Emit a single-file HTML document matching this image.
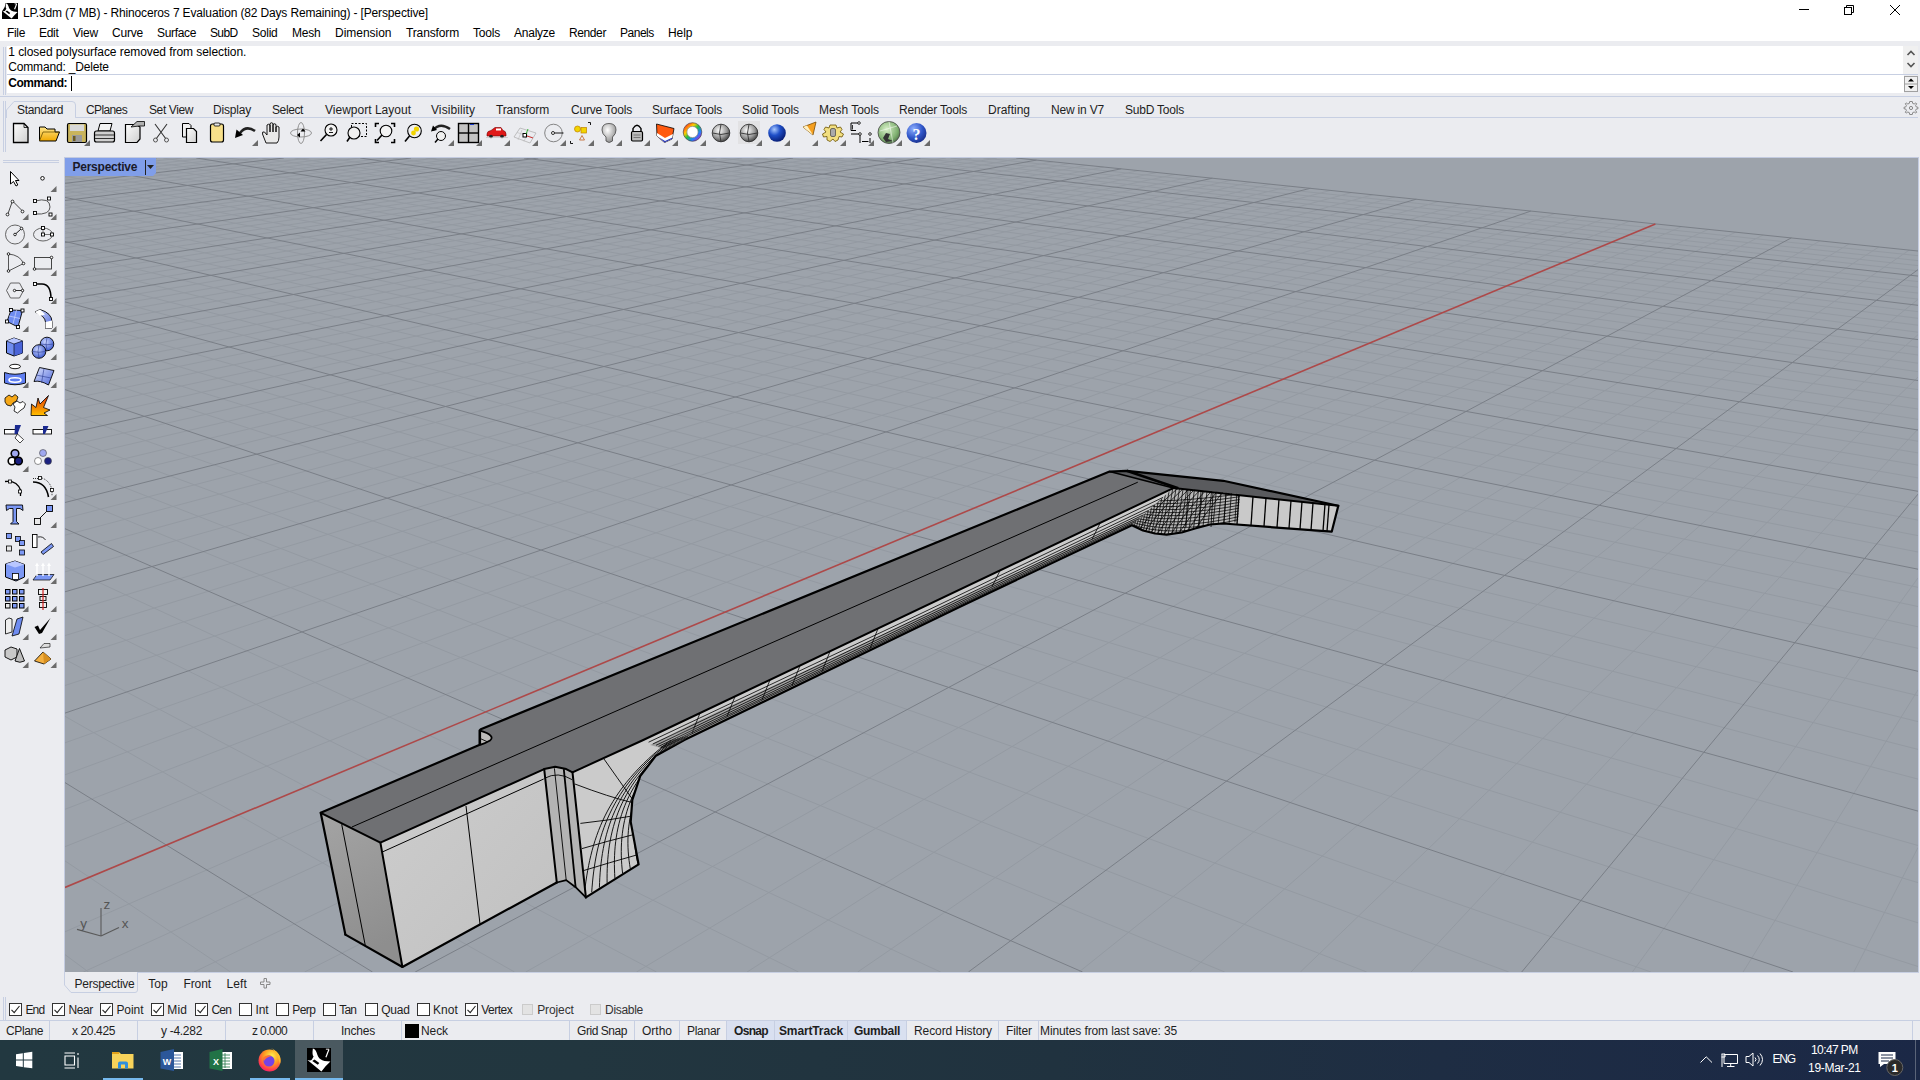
<!DOCTYPE html><html><head><meta charset="utf-8"><style>
html,body{margin:0;padding:0;}
body{width:1920px;height:1080px;overflow:hidden;position:relative;background:#ebecf0;font-family:"Liberation Sans",sans-serif;color:#000;}
.t{position:absolute;white-space:pre;}
.r{position:absolute;display:block;}
</style></head><body>
<div class="r" style="left:0px;top:0px;width:1920px;height:41px;background:#fff;"></div>
<svg class="r" style="left:2px;top:3px;" width="17" height="17" viewBox="0 0 17 17"><path d="M3.6 0 H16 V16 H0 V8.2 L1.2 6.5 Q3.2 4 3.6 0 Z" fill="#000"/><path d="M3.9 0.3 Q5.6 0.6 6.4 3 Q7 5 7.5 5.8 Q8.6 7.8 11.6 8.6 L15.6 9 L12.4 12.2 L9.6 15.6 L0.3 8 Q2.6 8.7 3.3 7.6 L4.4 5.6 Q3.3 4.8 3.9 0.3 Z" fill="#fff"/><path d="M3.5 8.6 L7.2 11.2 L8.2 10 L5 7.6 Z" fill="#000"/><path d="M14.6 1 L12.6 6.2" stroke="#fff" stroke-width="1.1"/><path d="M12.6 0.8 H14.8" stroke="#fff" stroke-width="0.8"/></svg>
<span class="t" style="left:23.00px;top:6.54px;font-size:12px;line-height:12px;letter-spacing:-0.146px;">LP.3dm (7 MB) - Rhinoceros 7 Evaluation (82 Days Remaining) - [Perspective]</span>
<svg class="r" style="left:1799px;top:9px;" width="10" height="2" viewBox="0 0 10 2"><rect x="0" y="0" width="10" height="1" fill="#000"/></svg>
<svg class="r" style="left:1844px;top:5px;" width="10" height="10" viewBox="0 0 10 10"><rect x="0.5" y="2.5" width="7" height="7" fill="none" stroke="#000"/><path d="M2.5 2.5 V0.5 H9.5 V7.5 H7.5" fill="none" stroke="#000"/></svg>
<svg class="r" style="left:1890px;top:5px;" width="10" height="10" viewBox="0 0 10 10"><path d="M0 0 L10 10 M10 0 L0 10" stroke="#000" stroke-width="1"/></svg>
<span class="t" style="left:7.00px;top:27.24px;font-size:12px;line-height:12px;letter-spacing:-0.334px;">File</span>
<span class="t" style="left:39.00px;top:27.24px;font-size:12px;line-height:12px;letter-spacing:-0.294px;">Edit</span>
<span class="t" style="left:73.00px;top:27.24px;font-size:12px;line-height:12px;letter-spacing:-0.198px;">View</span>
<span class="t" style="left:112.00px;top:27.24px;font-size:12px;line-height:12px;letter-spacing:-0.202px;">Curve</span>
<span class="t" style="left:157.00px;top:27.24px;font-size:12px;line-height:12px;letter-spacing:-0.336px;">Surface</span>
<span class="t" style="left:210.00px;top:27.24px;font-size:12px;line-height:12px;letter-spacing:-0.629px;">SubD</span>
<span class="t" style="left:252.00px;top:27.24px;font-size:12px;line-height:12px;letter-spacing:-0.237px;">Solid</span>
<span class="t" style="left:292.00px;top:27.24px;font-size:12px;line-height:12px;letter-spacing:-0.210px;">Mesh</span>
<span class="t" style="left:335.00px;top:27.24px;font-size:12px;line-height:12px;letter-spacing:-0.021px;">Dimension</span>
<span class="t" style="left:406.00px;top:27.24px;font-size:12px;line-height:12px;letter-spacing:-0.136px;">Transform</span>
<span class="t" style="left:473.00px;top:27.24px;font-size:12px;line-height:12px;letter-spacing:-0.202px;">Tools</span>
<span class="t" style="left:514.00px;top:27.24px;font-size:12px;line-height:12px;letter-spacing:-0.241px;">Analyze</span>
<span class="t" style="left:569.00px;top:27.24px;font-size:12px;line-height:12px;letter-spacing:-0.392px;">Render</span>
<span class="t" style="left:620.00px;top:27.24px;font-size:12px;line-height:12px;letter-spacing:-0.490px;">Panels</span>
<span class="t" style="left:668.00px;top:27.24px;font-size:12px;line-height:12px;letter-spacing:-0.045px;">Help</span>
<div class="r" style="left:7px;top:46px;width:1896px;height:28px;background:#fff;"></div>
<div class="r" style="left:7px;top:75px;width:1897px;height:18px;background:#fff;"></div>
<div class="r" style="left:7px;top:74px;width:1911px;height:1px;background:#c7cfe2;"></div>
<div class="r" style="left:3px;top:47px;width:1px;height:48px;background:#c7cfe2;"></div>
<div class="r" style="left:5px;top:47px;width:1px;height:48px;background:#c7cfe2;"></div>
<div class="r" style="left:1903px;top:46px;width:15px;height:28px;background:#f0f0f0;"></div>
<svg class="r" style="left:1906px;top:49px;" width="10" height="24" viewBox="0 0 10 24"><path d="M1.5 6 L5 2.5 L8.5 6" fill="none" stroke="#555" stroke-width="1.6"/><path d="M1.5 14 L5 17.5 L8.5 14" fill="none" stroke="#555" stroke-width="1.6"/></svg>
<svg class="r" style="left:1904px;top:76px;" width="14" height="16" viewBox="0 0 14 16"><rect x="0.5" y="0.5" width="13" height="15" fill="#f0f0f0" stroke="#a0a0a0"/><line x1="0.5" y1="8" x2="13.5" y2="8" stroke="#a0a0a0"/><path d="M4 5.5 L7 2.5 L10 5.5 Z" fill="#000"/><path d="M4 10 L7 13 L10 10 Z" fill="#000"/></svg>
<span class="t" style="left:8.30px;top:46.24px;font-size:12px;line-height:12px;letter-spacing:-0.063px;">1 closed polysurface removed from selection.</span>
<span class="t" style="left:8.30px;top:60.74px;font-size:12px;line-height:12px;letter-spacing:-0.180px;">Command: _Delete</span>
<span class="t" style="left:8.30px;top:77.24px;font-size:12px;line-height:12px;font-weight:700;letter-spacing:-0.496px;">Command:</span>
<div class="r" style="left:71px;top:76px;width:1px;height:15px;background:#000;"></div>
<div class="r" style="left:0px;top:96px;width:1920px;height:1px;background:#c7cfe2;"></div>
<div class="r" style="left:3px;top:101px;width:1px;height:51px;background:#c7cfe2;"></div>
<div class="r" style="left:5px;top:101px;width:1px;height:51px;background:#c7cfe2;"></div>
<div class="r" style="left:75px;top:117px;width:1843px;height:1px;background:#c7cfe2;"></div>
<svg class="r" style="left:6px;top:100px;" width="71" height="19" viewBox="0 0 71 19"><path d="M0.5 18 L0.5 10 L8 1.5 H66 Q69.5 1.5 69.5 5 V17.5" fill="#ebecf0" stroke="#c7cfe2"/></svg>
<span class="t" style="left:17.00px;top:104.14px;font-size:12px;line-height:12px;color:#1e1e1e;letter-spacing:-0.337px;">Standard</span>
<span class="t" style="left:86.00px;top:104.14px;font-size:12px;line-height:12px;color:#1e1e1e;letter-spacing:-0.622px;">CPlanes</span>
<span class="t" style="left:149.00px;top:104.14px;font-size:12px;line-height:12px;color:#1e1e1e;letter-spacing:-0.392px;">Set View</span>
<span class="t" style="left:213.00px;top:104.14px;font-size:12px;line-height:12px;color:#1e1e1e;letter-spacing:-0.192px;">Display</span>
<span class="t" style="left:272.00px;top:104.14px;font-size:12px;line-height:12px;color:#1e1e1e;letter-spacing:-0.392px;">Select</span>
<span class="t" style="left:325.00px;top:104.14px;font-size:12px;line-height:12px;color:#1e1e1e;letter-spacing:0.011px;">Viewport Layout</span>
<span class="t" style="left:431.00px;top:104.14px;font-size:12px;line-height:12px;color:#1e1e1e;letter-spacing:0.087px;">Visibility</span>
<span class="t" style="left:496.00px;top:104.14px;font-size:12px;line-height:12px;color:#1e1e1e;letter-spacing:-0.136px;">Transform</span>
<span class="t" style="left:571.00px;top:104.14px;font-size:12px;line-height:12px;color:#1e1e1e;letter-spacing:-0.194px;">Curve Tools</span>
<span class="t" style="left:652.00px;top:104.14px;font-size:12px;line-height:12px;color:#1e1e1e;letter-spacing:-0.191px;">Surface Tools</span>
<span class="t" style="left:742.00px;top:104.14px;font-size:12px;line-height:12px;color:#1e1e1e;letter-spacing:-0.074px;">Solid Tools</span>
<span class="t" style="left:819.00px;top:104.14px;font-size:12px;line-height:12px;color:#1e1e1e;letter-spacing:-0.047px;">Mesh Tools</span>
<span class="t" style="left:899.00px;top:104.14px;font-size:12px;line-height:12px;color:#1e1e1e;letter-spacing:-0.207px;">Render Tools</span>
<span class="t" style="left:988.00px;top:104.14px;font-size:12px;line-height:12px;color:#1e1e1e;letter-spacing:-0.002px;">Drafting</span>
<span class="t" style="left:1051.00px;top:104.14px;font-size:12px;line-height:12px;color:#1e1e1e;letter-spacing:-0.188px;">New in V7</span>
<span class="t" style="left:1125.00px;top:104.14px;font-size:12px;line-height:12px;color:#1e1e1e;letter-spacing:-0.215px;">SubD Tools</span>
<svg class="r" style="left:1903px;top:100px;" width="16" height="16" viewBox="0 0 16 16"><path d="M8 1.5 L9.3 1.5 L9.7 3.4 L11.2 4 L12.8 2.9 L13.7 3.8 L12.6 5.4 L13.2 6.9 L15 7.3 V8.7 L13.2 9.1 L12.6 10.6 L13.7 12.2 L12.8 13.1 L11.2 12 L9.7 12.6 L9.3 14.5 H6.7 L6.3 12.6 L4.8 12 L3.2 13.1 L2.3 12.2 L3.4 10.6 L2.8 9.1 L1 8.7 V7.3 L2.8 6.9 L3.4 5.4 L2.3 3.8 L3.2 2.9 L4.8 4 L6.3 3.4 L6.7 1.5 Z" fill="none" stroke="#888"/><circle cx="8" cy="8" r="1.6" fill="none" stroke="#888"/></svg>
<svg class="r" style="left:0px;top:0px;" width="960" height="160" viewBox="0 0 960 160"><defs>
<linearGradient id="gPage" x1="0" y1="0" x2="1" y2="1"><stop offset="0" stop-color="#fdfdfd"/><stop offset="1" stop-color="#cfcfcf"/></linearGradient>
<linearGradient id="gFold" x1="0" y1="0" x2="0" y2="1"><stop offset="0" stop-color="#ffe68a"/><stop offset="1" stop-color="#f0a800"/></linearGradient>
<radialGradient id="gSph" cx="0.4" cy="0.35" r="0.7"><stop offset="0" stop-color="#ffffff"/><stop offset="0.6" stop-color="#9a9a9a"/><stop offset="1" stop-color="#3a3a3a"/></radialGradient>
<radialGradient id="gBlue" cx="0.35" cy="0.3" r="0.75"><stop offset="0" stop-color="#a8c8ff"/><stop offset="0.45" stop-color="#1f4fc8"/><stop offset="1" stop-color="#061a70"/></radialGradient>
<radialGradient id="gGreen" cx="0.4" cy="0.35" r="0.7"><stop offset="0" stop-color="#d8f0c8"/><stop offset="0.7" stop-color="#7fb070"/><stop offset="1" stop-color="#4f6f48"/></radialGradient>
<radialGradient id="gHelp" cx="0.35" cy="0.3" r="0.75"><stop offset="0" stop-color="#8fb0ff"/><stop offset="0.6" stop-color="#2f55c8"/><stop offset="1" stop-color="#1a2f8a"/></radialGradient>
<radialGradient id="gBulb" cx="0.4" cy="0.35" r="0.7"><stop offset="0" stop-color="#ffffff"/><stop offset="1" stop-color="#8a8a8a"/></radialGradient>
<linearGradient id="gBlueS" x1="0" y1="0" x2="1" y2="1"><stop offset="0" stop-color="#c8d4ff"/><stop offset="1" stop-color="#4a64d8"/></linearGradient>
</defs><path d="M13.5 123.5 H24 L28 127.5 V142.5 H13.5 Z" fill="url(#gPage)" stroke="#000" stroke-width="1.3"/><path d="M24 123.5 V127.5 H28" fill="none" stroke="#000" stroke-width="0.8"/><path d="M39.5 127 H45 L47 129 H55 V132 H59.5 L56 141 H39.5 Z" fill="url(#gFold)" stroke="#000" stroke-width="1"/><path d="M39.5 141 L43 132 H59.5" fill="none" stroke="#6a5000" stroke-width="0.8"/><rect x="67.5" y="123.5" width="19" height="19" rx="1.5" fill="#c9b45c" stroke="#000" stroke-width="1.2"/><rect x="70" y="124.5" width="14" height="6.5" fill="#d8d8d8"/><rect x="72" y="135" width="10" height="7" fill="#9a9a9a"/><rect x="73" y="136" width="2.5" height="5" fill="#6a5a20"/><path d="M90.0 146.0 L84.0 146.0 L90.0 140.0 Z" fill="#6b6b6b"/><path d="M98 131 L100 123.5 H112 L110 131 Z" fill="#f4f4f4" stroke="#000" stroke-width="1"/><rect x="94.5" y="131" width="20" height="11" rx="2" fill="#d0d0d0" stroke="#000" stroke-width="1.2"/><line x1="95" y1="135" x2="114" y2="135" stroke="#333"/><line x1="95" y1="138.5" x2="114" y2="138.5" stroke="#333"/><path d="M125.5 124.5 H136 L140 127 V139 L137 142.5 H125.5 Z" fill="url(#gPage)" stroke="#000" stroke-width="1.2"/><path d="M131 127 L137 121.5 H144.5 V126 H139 Z" fill="#b0b0b0" stroke="#000" stroke-width="0.8"/><path d="M155 124 L166 139 M167 124 L156 139" stroke="#333" stroke-width="1.1" fill="none"/><circle cx="155.5" cy="140" r="2" fill="none" stroke="#555"/><circle cx="166.5" cy="140" r="2" fill="none" stroke="#555"/><path d="M182.5 123.5 H189 L191 125.5 V137 H182.5 Z" fill="#f0f0f0" stroke="#000" stroke-width="1"/><path d="M186.5 128.5 H193.5 L196.5 131.5 V142.5 H186.5 Z" fill="url(#gPage)" stroke="#000" stroke-width="1.2"/><rect x="210.5" y="124" width="13" height="18" rx="2" fill="#f8e08a" stroke="#000" stroke-width="1.2"/><rect x="214" y="123" width="6" height="3" rx="1" fill="#e8e8e8" stroke="#000" stroke-width="0.8"/><path d="M240 133 Q246 125 255 131" fill="none" stroke="#222" stroke-width="2.6"/><path d="M235 138 L236.5 129.5 L243 135 Z" fill="#000"/><path d="M258.0 146.0 L252.0 146.0 L258.0 140.0 Z" fill="#6b6b6b"/><path d="M266 143 L262.5 134 Q262 131 264.5 132 L267 135 V125 Q268.5 123.5 270 125 V132 V123.5 Q271.5 122 273 123.5 V132 V124.5 Q274.5 123 276 124.5 V132 V127 Q277.5 125.5 279 127 V137 Q279 141 277 143 Z" fill="#e8e8e8" stroke="#000" stroke-width="0.9"/><ellipse cx="301" cy="133" rx="10.5" ry="4" fill="none" stroke="#888" stroke-width="0.9"/><ellipse cx="301" cy="133" rx="3.5" ry="10.5" fill="none" stroke="#888" stroke-width="0.9"/><path d="M303 128.5 L305.5 131.5 H300.5 Z M297 135 L300 132.5 V137.5 Z" fill="#000"/><circle cx="331" cy="130" r="6" fill="#f4f4f4" stroke="#000" stroke-width="1.1"/><line x1="326.5" y1="134.5" x2="320.5" y2="141" stroke="#000" stroke-width="1.6"/><path d="M331 127 V131 M329 129 H333 M329 132.5 H333" stroke="#000" stroke-width="0.9"/><rect x="351.5" y="123.5" width="15" height="13" fill="none" stroke="#000" stroke-width="1" stroke-dasharray="2 1.5"/><circle cx="354" cy="133" r="6" fill="#f0f0f0" stroke="#000" stroke-width="1.1"/><line x1="350" y1="137" x2="347" y2="141.5" stroke="#000" stroke-width="1.6"/><path d="M375.5 127 V123.5 H379 M391 123.5 H394.5 V127 M394.5 139 V142.5 H391 M379 142.5 H375.5 V139" fill="none" stroke="#000" stroke-width="1.6"/><circle cx="386" cy="131" r="5.8" fill="#f4f4f4" stroke="#000" stroke-width="1.1"/><line x1="382" y1="135" x2="377" y2="140.5" stroke="#000" stroke-width="1.6"/><circle cx="414.5" cy="131" r="6.8" fill="#f0f0f0" stroke="#000" stroke-width="1.1"/><circle cx="416.5" cy="129" r="2.6" fill="#f2d400"/><circle cx="413.5" cy="133" r="2.4" fill="#f2d400"/><line x1="409.5" y1="136" x2="405" y2="141.5" stroke="#000" stroke-width="1.6"/><path d="M433 130 Q440 122 450 129" fill="none" stroke="#222" stroke-width="2.4"/><path d="M431 131.5 L433 125.5 L437 130 Z" fill="#000"/><circle cx="441" cy="136" r="4.5" fill="#f0f0f0" stroke="#000" stroke-width="1"/><line x1="438" y1="139" x2="435" y2="142.5" stroke="#000" stroke-width="1.5"/><path d="M454.0 146.0 L448.0 146.0 L454.0 140.0 Z" fill="#6b6b6b"/><rect x="458.5" y="123.5" width="20" height="19" fill="#c4c4c4" stroke="#000" stroke-width="1.4"/><line x1="468.5" y1="123.5" x2="468.5" y2="142.5" stroke="#000" stroke-width="1.4"/><line x1="458.5" y1="133" x2="478.5" y2="133" stroke="#000" stroke-width="1.4"/><rect x="470" y="124" width="4" height="1" fill="#1a3ac8"/><path d="M482.0 146.0 L476.0 146.0 L482.0 140.0 Z" fill="#6b6b6b"/><path d="M487 134 Q487 131 491 130.5 L495 127.5 H501 L503 130.5 Q506 131 506 134 V136 H487 Z" fill="#e01818" stroke="#700" stroke-width="0.6"/><rect x="496" y="128.5" width="5" height="2" fill="#fff"/><circle cx="491" cy="136.5" r="1.8" fill="#222"/><circle cx="502" cy="136.5" r="1.8" fill="#222"/><line x1="486" y1="137.5" x2="508" y2="137.5" stroke="#bbb" stroke-width="0.6"/><path d="M510.0 146.0 L504.0 146.0 L510.0 140.0 Z" fill="#6b6b6b"/><path d="M514 137 L520 128 L536 133 L530 143 Z" fill="none" stroke="#aaa" stroke-width="0.7"/><path d="M517 132.5 L533 137.5 M522 130 L518 140 M528 131.5 L524 141.5" stroke="#bbb" stroke-width="0.6"/><rect x="523" y="133.5" width="3.5" height="3.5" fill="#fff" stroke="#000"/><path d="M526 134 L528 129" stroke="#2a2" stroke-width="0.9"/><path d="M527 136 L533 138" stroke="#c22" stroke-width="0.9"/><path d="M538.0 146.0 L532.0 146.0 L538.0 140.0 Z" fill="#6b6b6b"/><circle cx="553.5" cy="133" r="8.8" fill="none" stroke="#777" stroke-width="0.9"/><circle cx="553" cy="133" r="1.5" fill="#fff" stroke="#000" stroke-width="0.8"/><line x1="554.5" y1="133" x2="563.5" y2="133" stroke="#000" stroke-width="0.9"/><path d="M566.0 146.0 L560.0 146.0 L566.0 140.0 Z" fill="#6b6b6b"/><circle cx="577.5" cy="129" r="3" fill="#f2d400" stroke="#c08000" stroke-width="0.7"/><rect x="581" y="127.5" width="5.5" height="5.5" fill="#f2d400" stroke="#c08000" stroke-width="0.7"/><path d="M579.5 140 L582 135.5 L584.5 140 Z" fill="none" stroke="#c06020" stroke-width="0.8"/><path d="M588 122.5 H590.5 V125 M570.5 141 V143.5 H573" fill="none" stroke="#000" stroke-width="0.9"/><path d="M594.0 146.0 L588.0 146.0 L594.0 140.0 Z" fill="#6b6b6b"/><path d="M609 123.5 Q616 123.5 616 130 Q616 134 612.5 137 V141 Q609 144 606 141 V137 Q602 134 602 130 Q602 123.5 609 123.5 Z" fill="url(#gBulb)" stroke="#555" stroke-width="0.9"/><path d="M622.0 146.0 L616.0 146.0 L622.0 140.0 Z" fill="#6b6b6b"/><path d="M633 132 V128.5 Q637 122 641 128.5 V132" fill="none" stroke="#000" stroke-width="1.4"/><rect x="631.5" y="131.5" width="11" height="9.5" rx="1.2" fill="#bbb" stroke="#000" stroke-width="1.2"/><line x1="633.5" y1="135" x2="640.5" y2="135" stroke="#777"/><line x1="633.5" y1="137.5" x2="640.5" y2="137.5" stroke="#777"/><path d="M650.0 146.0 L644.0 146.0 L650.0 140.0 Z" fill="#6b6b6b"/><path d="M656.5 124 L674 128.5 L672 139 L664.5 142.5 L657 136 Z" fill="#ff5a10" stroke="#000" stroke-width="0.8"/><path d="M657 133 L665 138 L673 134 L672 139 L664.5 142.5 L657 136 Z" fill="#ffffff"/><path d="M658.5 137 L665 141 L672.5 137.5 L672 139 L664.5 142.5 Z" fill="#2a3ab8"/><path d="M678.0 146.0 L672.0 146.0 L678.0 140.0 Z" fill="#6b6b6b"/><circle cx="692.5" cy="132" r="7.5" fill="none" stroke="url(#gRain)" stroke-width="3.5"/><defs><linearGradient id="gRain" x1="0" y1="0" x2="1" y2="1"><stop offset="0" stop-color="#ff2020"/><stop offset="0.3" stop-color="#ffd000"/><stop offset="0.5" stop-color="#20c040"/><stop offset="0.75" stop-color="#2080ff"/><stop offset="1" stop-color="#c020c0"/></linearGradient></defs><circle cx="692.5" cy="132" r="9.3" fill="none" stroke="#333" stroke-width="0.6"/><circle cx="692.5" cy="132" r="5.6" fill="#fff" stroke="#555" stroke-width="0.5"/><path d="M706.0 146.0 L700.0 146.0 L706.0 140.0 Z" fill="#6b6b6b"/><circle cx="721" cy="133" r="8.8" fill="url(#gSph)" stroke="#222" stroke-width="0.8"/><path d="M712.5 133 Q721 136 729.5 133 M721 124.2 Q718 133 721 141.8" fill="none" stroke="#333" stroke-width="0.9"/><rect x="738" y="121" width="22" height="23" fill="#e2e2e4"/><circle cx="749" cy="133" r="8.8" fill="url(#gSph)" stroke="#222" stroke-width="0.8"/><path d="M740.5 133 Q749 136 757.5 133 M749 124.2 Q746 133 749 141.8" fill="none" stroke="#333" stroke-width="0.9"/><path d="M762.0 146.0 L756.0 146.0 L762.0 140.0 Z" fill="#6b6b6b"/><circle cx="777" cy="133" r="8.8" fill="url(#gBlue)"/><path d="M790.0 146.0 L784.0 146.0 L790.0 140.0 Z" fill="#6b6b6b"/><path d="M803 127 L816 122 L813 135 Z" fill="#f6a020" stroke="#7a4a00" stroke-width="0.8"/><path d="M803 127 L807 125.5 L813 135 Z" fill="#fff0c0"/><path d="M818.0 146.0 L812.0 146.0 L818.0 140.0 Z" fill="#6b6b6b"/><path d="M833 125 L836 125 L837 128 L840.5 127 L842 129.5 L840 132 L843.5 134 L842 137 L839 136.5 L838 140 L835 141.5 L833 139 L830 141.5 L827 140 L827 136.5 L823.5 137 L822.5 134 L826 132 L824 129.5 L825.5 127 L829 128 L830 125 Z" fill="#f2df80" stroke="#6a5000" stroke-width="0.8"/><rect x="830.5" y="128.5" width="5" height="8" rx="1.5" fill="#aaa" stroke="#444" stroke-width="0.7"/><path d="M846.0 146.0 L840.0 146.0 L846.0 140.0 Z" fill="#6b6b6b"/><path d="M851 123 V130.5 H856 M851 123 H858" fill="none" stroke="#000" stroke-width="1"/><circle cx="859" cy="123" r="1.3" fill="#fff" stroke="#000" stroke-width="0.8"/><path d="M852.5 125 V129.5" stroke="#000" stroke-width="0.8"/><path d="M851 134 H860 V143 M870 138 V143 M862 141.5 H868.5" fill="none" stroke="#000" stroke-width="1"/><circle cx="860" cy="134" r="1.3" fill="#fff" stroke="#000" stroke-width="0.8"/><circle cx="870" cy="134" r="1.3" fill="#fff" stroke="#000" stroke-width="0.8"/><path d="M874.0 146.0 L868.0 146.0 L874.0 140.0 Z" fill="#6b6b6b"/><circle cx="889" cy="132.5" r="11" fill="url(#gGreen)" stroke="#444" stroke-width="0.8"/><path d="M883 138 L886 133 L890 134 L888 139 L893 141 L886 142 Z" fill="#333"/><path d="M880 131 L897 126 M889 121.5 L893 143" stroke="#fff" stroke-width="0.5" fill="none"/><path d="M902.0 146.0 L896.0 146.0 L902.0 140.0 Z" fill="#6b6b6b"/><circle cx="916.5" cy="133" r="10" fill="url(#gHelp)"/><text x="916.5" y="140" text-anchor="middle" font-family="Liberation Serif" font-weight="700" font-size="16" fill="#fff">?</text><path d="M930.0 146.0 L924.0 146.0 L930.0 140.0 Z" fill="#6b6b6b"/></svg>
<svg class="r" style="left:0px;top:0px;" width="64" height="680" viewBox="0 0 64 680"><rect x="3" y="160" width="56" height="1" fill="#c7cfe2"/><rect x="3" y="162" width="56" height="1" fill="#c7cfe2"/><path d="M56.5 192.0 L50.5 192.0 L56.5 186.0 Z" fill="#6b6b6b"/><path d="M28.5 220.0 L22.5 220.0 L28.5 214.0 Z" fill="#6b6b6b"/><path d="M56.5 220.0 L50.5 220.0 L56.5 214.0 Z" fill="#6b6b6b"/><path d="M28.5 248.0 L22.5 248.0 L28.5 242.0 Z" fill="#6b6b6b"/><path d="M56.5 248.0 L50.5 248.0 L56.5 242.0 Z" fill="#6b6b6b"/><path d="M28.5 276.0 L22.5 276.0 L28.5 270.0 Z" fill="#6b6b6b"/><path d="M56.5 276.0 L50.5 276.0 L56.5 270.0 Z" fill="#6b6b6b"/><path d="M28.5 304.0 L22.5 304.0 L28.5 298.0 Z" fill="#6b6b6b"/><path d="M56.5 304.0 L50.5 304.0 L56.5 298.0 Z" fill="#6b6b6b"/><path d="M28.5 332.0 L22.5 332.0 L28.5 326.0 Z" fill="#6b6b6b"/><path d="M56.5 332.0 L50.5 332.0 L56.5 326.0 Z" fill="#6b6b6b"/><path d="M28.5 360.0 L22.5 360.0 L28.5 354.0 Z" fill="#6b6b6b"/><path d="M56.5 360.0 L50.5 360.0 L56.5 354.0 Z" fill="#6b6b6b"/><path d="M28.5 388.0 L22.5 388.0 L28.5 382.0 Z" fill="#6b6b6b"/><path d="M56.5 388.0 L50.5 388.0 L56.5 382.0 Z" fill="#6b6b6b"/><path d="M28.5 472.0 L22.5 472.0 L28.5 466.0 Z" fill="#6b6b6b"/><path d="M56.5 500.0 L50.5 500.0 L56.5 494.0 Z" fill="#6b6b6b"/><path d="M56.5 528.0 L50.5 528.0 L56.5 522.0 Z" fill="#6b6b6b"/><path d="M28.5 584.0 L22.5 584.0 L28.5 578.0 Z" fill="#6b6b6b"/><path d="M56.5 584.0 L50.5 584.0 L56.5 578.0 Z" fill="#6b6b6b"/><path d="M28.5 612.0 L22.5 612.0 L28.5 606.0 Z" fill="#6b6b6b"/><path d="M56.5 612.0 L50.5 612.0 L56.5 606.0 Z" fill="#6b6b6b"/><path d="M28.5 640.0 L22.5 640.0 L28.5 634.0 Z" fill="#6b6b6b"/><path d="M56.5 640.0 L50.5 640.0 L56.5 634.0 Z" fill="#6b6b6b"/><path d="M28.5 668.0 L22.5 668.0 L28.5 662.0 Z" fill="#6b6b6b"/><path d="M56.5 668.0 L50.5 668.0 L56.5 662.0 Z" fill="#6b6b6b"/><path d="M10.5 171.5 V184 L13.5 181.5 L16 186 L17.8 185 L15.5 180.5 H19 Z" fill="#fff" stroke="#000" stroke-width="1"/><circle cx="42.5" cy="178.3" r="1.8" fill="#fff" stroke="#000" stroke-width="0.9"/><polyline points="7.5,215 12.5,201 22.5,211" fill="none" stroke="#333" stroke-width="0.9"/><circle cx="7.5" cy="214.5" r="1.4" fill="#fff" stroke="#000" stroke-width="0.8"/><circle cx="12.5" cy="201.5" r="1.4" fill="#fff" stroke="#000" stroke-width="0.8"/><circle cx="22.5" cy="211.5" r="1.4" fill="#fff" stroke="#000" stroke-width="0.8"/><path d="M35 201 Q50 197 50 207 Q50 215 35 214" fill="none" stroke="#444" stroke-width="0.9"/><rect x="33.5" y="199.5" width="3" height="3" fill="#fff" stroke="#000" stroke-width="0.9"/><rect x="47.5" y="197" width="3" height="3" fill="#fff" stroke="#000" stroke-width="0.9"/><rect x="33.5" y="211.5" width="3" height="3" fill="#fff" stroke="#000" stroke-width="0.9"/><rect x="49" y="213" width="3" height="3" fill="#fff" stroke="#000" stroke-width="0.9"/><circle cx="15" cy="234.5" r="9.5" fill="none" stroke="#555" stroke-width="0.9"/><line x1="15" y1="234.5" x2="21.5" y2="228.5" stroke="#000" stroke-width="0.9"/><circle cx="15" cy="234.5" r="1.3" fill="#fff" stroke="#000" stroke-width="0.8"/><circle cx="21.5" cy="228.5" r="1.3" fill="#fff" stroke="#000" stroke-width="0.8"/><ellipse cx="43" cy="234.5" rx="9.5" ry="6.5" fill="none" stroke="#555" stroke-width="0.9"/><path d="M43 228 V234.5 H52" stroke="#555" stroke-width="0.8" fill="none"/><rect x="41.5" y="226.5" width="3" height="3" fill="#fff" stroke="#000" stroke-width="0.9"/><rect x="41.5" y="233" width="3" height="3" fill="#fff" stroke="#000" stroke-width="0.9"/><rect x="50.5" y="233" width="3" height="3" fill="#fff" stroke="#000" stroke-width="0.9"/><path d="M8.5 254 Q20 255 23.5 263.5 L8.5 271 Z" fill="none" stroke="#444" stroke-width="0.9"/><circle cx="8.5" cy="254" r="1.3" fill="#fff" stroke="#000" stroke-width="0.8"/><circle cx="23.5" cy="263.5" r="1.3" fill="#fff" stroke="#000" stroke-width="0.8"/><circle cx="8.5" cy="271" r="1.3" fill="#fff" stroke="#000" stroke-width="0.8"/><rect x="34.5" y="257.5" width="17" height="11.5" fill="none" stroke="#333" stroke-width="0.9"/><circle cx="34.5" cy="269" r="1.3" fill="#fff" stroke="#000" stroke-width="0.8"/><circle cx="51.5" cy="257.5" r="1.3" fill="#fff" stroke="#000" stroke-width="0.8"/><path d="M6.5 290.5 L10.5 283 H19.5 L23.5 290.5 L19.5 298 H10.5 Z" fill="none" stroke="#555" stroke-width="0.9"/><line x1="14.5" y1="290.5" x2="22.5" y2="290.5" stroke="#000" stroke-width="0.8"/><circle cx="14.5" cy="290.5" r="1.2" fill="#fff" stroke="#000" stroke-width="0.8"/><circle cx="22.5" cy="290.5" r="1.2" fill="#fff" stroke="#000" stroke-width="0.8"/><path d="M35 284 H42 Q51 284 51 299" fill="none" stroke="#000" stroke-width="1.6"/><rect x="33.5" y="282.5" width="3" height="3" fill="#fff" stroke="#000" stroke-width="0.9"/><rect x="49.5" y="297.5" width="3" height="3" fill="#fff" stroke="#000" stroke-width="0.9"/><path d="M7 321.5 L11 310 L22.5 310.5 L18 327 Z" fill="#6f8cf0" stroke="#000" stroke-width="0.9"/><path d="M9 316 L20 318.5 M16.5 310 L13 324" stroke="#cfd8ff" stroke-width="0.7"/><rect x="9.5" y="308.5" width="3" height="3" fill="#fff" stroke="#000" stroke-width="0.9"/><rect x="21" y="309" width="3" height="3" fill="#fff" stroke="#000" stroke-width="0.9"/><rect x="5.5" y="320" width="3" height="3" fill="#fff" stroke="#000" stroke-width="0.9"/><rect x="16.5" y="325.5" width="3" height="3" fill="#fff" stroke="#000" stroke-width="0.9"/><path d="M35 312 L40 309.5 Q52 313 52 322 V328 L45.5 328.5 V322 Q45 316 35 312 Z" fill="url(#gBlueL)" stroke="#000" stroke-width="0.9"/><path d="M35 312 L40 309.5 L45 314.5 L40 316 Z" fill="#fff"/><path d="M45.5 322 L52 320.5 V328 L45.5 328.5 Z" fill="#fff"/><defs><linearGradient id="gBlueL" x1="0" y1="0" x2="1" y2="1"><stop offset="0" stop-color="#dfe6ff"/><stop offset="1" stop-color="#4a64d8"/></linearGradient><radialGradient id="gBS" cx="0.4" cy="0.35" r="0.7"><stop offset="0" stop-color="#cdd8ff"/><stop offset="1" stop-color="#3a58d0"/></radialGradient></defs><path d="M6.5 341 L14 338 L22.5 341 V353 L14 356 L6.5 353 Z" fill="#6f8cf0" stroke="#000" stroke-width="1"/><path d="M6.5 341 L14 344 L22.5 341 L14 338 Z" fill="#b8c6ff"/><path d="M14 344 V356 L22.5 353 V341 Z" fill="#4a64d8"/><path d="M6.5 341 L14 344 L22.5 341 M14 344 V356" fill="none" stroke="#000" stroke-width="0.6"/><circle cx="47" cy="344" r="6.8" fill="url(#gBS)" stroke="#000" stroke-width="0.9"/><circle cx="39" cy="351.5" r="6.8" fill="url(#gBS)" stroke="#000" stroke-width="0.9"/><path d="M32.5 351.5 Q39 353 45.5 351.5 M39 345 Q37 351 39 358 M40.5 344 Q47 345.5 53.5 344 M47 337.5 Q45 344 47 350.5" stroke="#2a3a90" stroke-width="0.6" fill="none"/><ellipse cx="15" cy="366.5" rx="5.5" ry="2.2" fill="#fff" stroke="#000" stroke-width="0.9"/><path d="M4.5 372.5 Q15 376 25.5 372.5 V383 Q15 386.5 4.5 383 Z" fill="#5f7ef0" stroke="#000" stroke-width="0.9"/><ellipse cx="15" cy="380" rx="6" ry="2.2" fill="none" stroke="#fff" stroke-width="1.6"/><path d="M34 381.5 L39.5 367.5 L54 370.5 L48.5 385 Q40 380 34 381.5 Z" fill="url(#gBlueL)" stroke="#000" stroke-width="0.9"/><path d="M36 375 L51 378 M44 368.5 L41.5 383" stroke="#2a3a90" stroke-width="0.6"/><path d="M5 398 L9 395 L12 397 L15 394.5 L18 397 L16.5 401 L13 403 L11 406 L7 405 L5 402 Z" fill="#f6a818" stroke="#000" stroke-width="0.8"/><path d="M13 404 L17 401 L20 403 L23 401.5 L25.5 404 L24 408 L21 410 L17.5 413 L14 411 L15 407 Z" fill="#fff" stroke="#000" stroke-width="0.8"/><path d="M31 415.5 L31.5 404 L36 407.5 L38 398 L40 404 L48.5 395.5 L43.5 407.5 L50 410 L44 413 L47.5 415.5 Z" fill="url(#gExp)" stroke="#000" stroke-width="0.8"/><defs><linearGradient id="gExp" x1="0" y1="0" x2="0" y2="1"><stop offset="0" stop-color="#e03000"/><stop offset="1" stop-color="#ffc000"/></linearGradient></defs><rect x="4.5" y="429.5" width="13" height="4.5" fill="#fff" stroke="#000" stroke-width="0.9"/><path d="M15 425 H21 L17.5 434 H14.5 Z" fill="#1a2a90"/><path d="M17.5 434 L23.5 439.5 L20 443 L15 438 Z" fill="#fff" stroke="#000" stroke-width="0.7"/><rect x="33" y="429.5" width="18.5" height="4.5" fill="#fff" stroke="#000" stroke-width="0.9"/><path d="M43 426 H48.5 L45 434 H43 Z" fill="#1a2a90"/><circle cx="15" cy="453.5" r="3.8" fill="#9fa8f0" stroke="#000" stroke-width="1.6"/><circle cx="12" cy="461" r="3.8" fill="#fff" stroke="#000" stroke-width="1.6"/><circle cx="18.5" cy="461" r="3.8" fill="#1a2080" stroke="#000" stroke-width="1.6"/><circle cx="43" cy="453" r="3.5" fill="#9fa8f0" stroke="#444" stroke-width="0.6"/><circle cx="38" cy="461" r="3.5" fill="#fff" stroke="#444" stroke-width="0.6"/><circle cx="48" cy="461" r="3.5" fill="#1a2080" stroke="#444" stroke-width="0.6"/><path d="M5 481.5 Q17 480 20.5 490 V496" fill="none" stroke="#000" stroke-width="1.3"/><rect x="8.5" y="480" width="3" height="3" fill="#fff" stroke="#000" stroke-width="0.8"/><rect x="18.5" y="490" width="3" height="3" fill="#fff" stroke="#000" stroke-width="0.8"/><path d="M33 482 Q46 482 48.5 497" fill="none" stroke="#000" stroke-width="1.6"/><path d="M33 478.5 H39 M42 478 Q50 481 52 490 V496" fill="none" stroke="#000" stroke-width="0.8" stroke-dasharray="1 1"/><rect x="38.5" y="476.5" width="3" height="3" fill="#fff" stroke="#000" stroke-width="0.8"/><rect x="50.5" y="488.5" width="3" height="3" fill="#fff" stroke="#000" stroke-width="0.8"/><path d="M6 505 H22.5 L23 510.5 L20 508.5 H16.5 V521.5 L19 524 H10.5 L13 521.5 V508.5 H9.5 L6.5 510.5 Z" fill="#7c98f4" stroke="#000" stroke-width="0.9"/><rect x="34.5" y="518.5" width="6" height="6" fill="#e8e8e8" stroke="#000" stroke-width="0.9"/><rect x="46.5" y="505.5" width="6" height="6" fill="#7c98f4" stroke="#000" stroke-width="0.9"/><path d="M40 518 L46 512" stroke="#000" stroke-width="0.9"/><rect x="6.5" y="533.5" width="5" height="5" fill="#7c98f4" stroke="#000" stroke-width="0.8"/><rect x="15.5" y="536.5" width="5" height="5" fill="#7c98f4" stroke="#000" stroke-width="0.8"/><rect x="19.5" y="540.5" width="5" height="5" fill="#7c98f4" stroke="#000" stroke-width="0.8"/><rect x="6.5" y="546" width="5" height="5" fill="#e8e8e8" stroke="#000" stroke-width="0.8"/><rect x="19.5" y="550" width="5" height="5" fill="#7c98f4" stroke="#000" stroke-width="0.8"/><rect x="32.5" y="534.5" width="4.5" height="13" fill="#fff" stroke="#000" stroke-width="0.9"/><path d="M41 552 L51.5 543.5 L53.5 546.5 L43 554.5 Z" fill="#7c98f4" stroke="#000" stroke-width="0.8"/><path d="M38 537 Q43 536 45.5 540" fill="none" stroke="#000" stroke-width="0.8"/><path d="M5.5 564 L15 561 L24.5 564.5 V577 L16 581 L5.5 577 Z" fill="#7c98f4" stroke="#000" stroke-width="1"/><path d="M5.5 564 L15 567.5 L24.5 564.5 L15 561 Z" fill="#b8c6ff"/><rect x="12.5" y="573.5" width="6" height="6" fill="#fff" stroke="#000" stroke-width="0.8"/><path d="M33 580 L37 574.5 H54 L50 580 Z" fill="#7c98f4" stroke="#000" stroke-width="0.7"/><path d="M37 576 V565 M43 576 V565 M49 576 V565" stroke="#fff" stroke-width="1.4"/><path d="M35 566 L37 562.5 L39 566 Z M41 566 L43 562.5 L45 566 Z M47 566 L49 562.5 L51 566 Z" fill="#fff"/><rect x="5.5" y="589.5" width="4.5" height="4.5" fill="#7c98f4" stroke="#000" stroke-width="1"/><rect x="12.5" y="589.5" width="4.5" height="4.5" fill="#7c98f4" stroke="#000" stroke-width="1"/><rect x="19.5" y="589.5" width="4.5" height="4.5" fill="#7c98f4" stroke="#000" stroke-width="1"/><rect x="5.5" y="596.5" width="4.5" height="4.5" fill="#7c98f4" stroke="#000" stroke-width="1"/><rect x="12.5" y="596.5" width="4.5" height="4.5" fill="#7c98f4" stroke="#000" stroke-width="1"/><rect x="19.5" y="596.5" width="4.5" height="4.5" fill="#7c98f4" stroke="#000" stroke-width="1"/><rect x="5.5" y="603.5" width="4.5" height="4.5" fill="#e8e8e8" stroke="#000" stroke-width="1"/><rect x="12.5" y="603.5" width="4.5" height="4.5" fill="#7c98f4" stroke="#000" stroke-width="1"/><rect x="19.5" y="603.5" width="4.5" height="4.5" fill="#7c98f4" stroke="#000" stroke-width="1"/><rect x="38.5" y="589.5" width="9" height="5" fill="#eee" stroke="#000" stroke-width="0.9"/><rect x="40" y="596.5" width="6" height="4" fill="#eee" stroke="#000" stroke-width="0.9"/><rect x="39.5" y="602.5" width="7" height="5" fill="#eee" stroke="#000" stroke-width="0.9"/><line x1="43" y1="588" x2="43" y2="610" stroke="#d02020" stroke-width="1.2"/><path d="M5.5 620 L9 618 L12 619 V632 L5.5 634 Z" fill="#eee" stroke="#000" stroke-width="0.8"/><path d="M12 636 L17 619 L23 617 L19 634 Z" fill="#6f8cf0" stroke="#000" stroke-width="0.8"/><path d="M34.5 627 L38 625.5 L40 630 L50.5 618 L42 633 L39 634 Z" fill="#000"/><path d="M5 650 L11 647 L17 649 V657 L11 660 L5 657 Z" fill="#c8c8c8" stroke="#000" stroke-width="0.9"/><path d="M19.5 648.5 L24.5 661 Q20 663.5 15 661 Z" fill="#bdbdbd" stroke="#000" stroke-width="0.9"/><path d="M34.5 661 L43 652 L51 659 L44 664 Z" fill="#f4b040" stroke="#000" stroke-width="0.8"/><path d="M43 652 L44 664 L51 659 Z" fill="#d89020"/><path d="M40 648 L44 643.5 H50 V647 Z" fill="#ddd" stroke="#000" stroke-width="0.6"/></svg>
<div class="r" style="left:64px;top:157px;width:1855px;height:1px;background:#c3cbe0;"></div>
<div class="r" style="left:64px;top:157px;width:1px;height:815px;background:#c3cbe0;"></div>
<div class="r" style="left:1918px;top:157px;width:1px;height:815px;background:#c3cbe0;"></div>
<svg class="r" style="left:65px;top:158px;" width="1853" height="814" viewBox="0 0 1853 814"><rect x="0" y="0" width="1853" height="814" fill="#9da3ab"/><g stroke="#949aa2" stroke-width="1" fill="none"><line x1="918.4" y1="0.0" x2="1853.0" y2="97.7"/><line x1="885.5" y1="0.0" x2="1853.0" y2="102.6"/><line x1="852.7" y1="0.0" x2="1853.0" y2="107.6"/><line x1="819.9" y1="0.0" x2="1853.0" y2="112.8"/><line x1="754.3" y1="0.0" x2="1853.0" y2="123.6"/><line x1="721.4" y1="0.0" x2="1853.0" y2="129.2"/><line x1="688.6" y1="0.0" x2="1853.0" y2="135.1"/><line x1="655.8" y1="-0.0" x2="1853.0" y2="141.1"/><line x1="590.2" y1="0.0" x2="1853.0" y2="153.7"/><line x1="557.4" y1="-0.0" x2="1853.0" y2="160.3"/><line x1="524.6" y1="0.0" x2="1853.0" y2="167.2"/><line x1="491.8" y1="0.0" x2="1853.0" y2="174.2"/><line x1="426.2" y1="0.0" x2="1853.0" y2="189.2"/><line x1="393.4" y1="0.0" x2="1853.0" y2="197.0"/><line x1="360.6" y1="0.0" x2="1853.0" y2="205.2"/><line x1="327.9" y1="0.0" x2="1853.0" y2="213.7"/><line x1="262.3" y1="0.0" x2="1853.0" y2="231.6"/><line x1="229.5" y1="0.0" x2="1853.0" y2="241.1"/><line x1="196.7" y1="0.0" x2="1853.0" y2="251.0"/><line x1="164.0" y1="0.0" x2="1853.0" y2="261.3"/><line x1="98.4" y1="0.0" x2="1853.0" y2="283.2"/><line x1="65.7" y1="0.0" x2="1853.0" y2="294.9"/><line x1="32.9" y1="0.0" x2="1853.0" y2="307.1"/><line x1="0.1" y1="0.0" x2="1853.0" y2="319.9"/><line x1="0.0" y1="11.8" x2="1853.0" y2="347.4"/><line x1="0.0" y1="18.2" x2="1853.0" y2="362.1"/><line x1="0.0" y1="24.9" x2="1853.0" y2="377.6"/><line x1="0.0" y1="32.0" x2="1853.0" y2="394.0"/><line x1="0.0" y1="47.2" x2="1853.0" y2="429.3"/><line x1="0.0" y1="55.5" x2="1853.0" y2="448.5"/><line x1="0.0" y1="64.3" x2="1853.0" y2="468.8"/><line x1="0.0" y1="73.6" x2="1853.0" y2="490.4"/><line x1="0.0" y1="94.0" x2="1853.0" y2="537.6"/><line x1="0.0" y1="105.3" x2="1853.0" y2="563.6"/><line x1="-0.0" y1="117.3" x2="1853.0" y2="591.4"/><line x1="0.0" y1="130.1" x2="1853.0" y2="621.1"/><line x1="0.0" y1="158.8" x2="1853.0" y2="687.5"/><line x1="-0.0" y1="174.8" x2="1853.0" y2="724.6"/><line x1="0.0" y1="192.2" x2="1853.0" y2="764.8"/><line x1="0.0" y1="211.0" x2="1853.0" y2="808.5"/><line x1="0.0" y1="254.2" x2="1585.9" y2="814.0"/><line x1="0.0" y1="278.9" x2="1443.8" y2="814.0"/><line x1="0.0" y1="306.3" x2="1301.7" y2="814.0"/><line x1="0.0" y1="336.7" x2="1159.7" y2="814.0"/><line x1="0.0" y1="408.8" x2="875.6" y2="814.0"/><line x1="0.0" y1="452.1" x2="733.5" y2="814.0"/><line x1="-0.0" y1="501.4" x2="591.5" y2="814.0"/><line x1="0.0" y1="558.3" x2="449.5" y2="814.0"/><line x1="0.0" y1="702.9" x2="165.5" y2="814.0"/><line x1="0.0" y1="796.6" x2="23.5" y2="814.0"/><line x1="1853.0" y1="689.5" x2="1788.8" y2="814.0"/><line x1="1853.0" y1="531.9" x2="1678.1" y2="814.0"/><line x1="1853.0" y1="419.9" x2="1567.4" y2="814.0"/><line x1="1853.0" y1="271.1" x2="1346.1" y2="814.0"/><line x1="1853.0" y1="219.1" x2="1235.4" y2="814.0"/><line x1="1853.0" y1="176.7" x2="1124.7" y2="814.0"/><line x1="1853.0" y1="141.4" x2="1014.0" y2="814.0"/><line x1="1844.2" y1="92.1" x2="792.7" y2="814.0"/><line x1="1813.9" y1="88.9" x2="682.1" y2="814.0"/><line x1="1784.2" y1="85.9" x2="571.5" y2="814.0"/><line x1="1755.0" y1="82.9" x2="460.8" y2="814.0"/><line x1="1698.1" y1="77.0" x2="239.6" y2="814.0"/><line x1="1670.5" y1="74.2" x2="129.0" y2="814.0"/><line x1="1643.3" y1="71.4" x2="18.4" y2="814.0"/><line x1="1616.6" y1="68.6" x2="0.0" y2="773.8"/><line x1="1564.6" y1="63.2" x2="0.0" y2="688.7"/><line x1="1539.3" y1="60.6" x2="0.0" y2="651.3"/><line x1="1514.4" y1="58.1" x2="0.0" y2="616.8"/><line x1="1489.9" y1="55.5" x2="0.0" y2="584.8"/><line x1="1442.1" y1="50.6" x2="0.0" y2="527.5"/><line x1="1418.8" y1="48.2" x2="0.0" y2="501.8"/><line x1="1395.9" y1="45.9" x2="0.0" y2="477.6"/><line x1="1373.4" y1="43.5" x2="0.0" y2="455.1"/><line x1="1329.3" y1="39.0" x2="0.0" y2="413.9"/><line x1="1307.8" y1="36.8" x2="0.0" y2="395.0"/><line x1="1286.7" y1="34.6" x2="0.0" y2="377.2"/><line x1="1265.8" y1="32.4" x2="0.0" y2="360.4"/><line x1="1225.1" y1="28.2" x2="0.0" y2="329.4"/><line x1="1205.2" y1="26.2" x2="0.0" y2="315.0"/><line x1="1185.6" y1="24.2" x2="0.0" y2="301.4"/><line x1="1166.3" y1="22.2" x2="0.0" y2="288.4"/><line x1="1128.5" y1="18.3" x2="0.0" y2="264.1"/><line x1="1110.0" y1="16.4" x2="0.0" y2="252.8"/><line x1="1091.8" y1="14.5" x2="0.0" y2="242.0"/><line x1="1073.9" y1="12.6" x2="0.0" y2="231.7"/><line x1="1038.8" y1="9.0" x2="0.0" y2="212.2"/><line x1="1021.6" y1="7.3" x2="0.0" y2="203.1"/><line x1="1004.6" y1="5.5" x2="0.0" y2="194.3"/><line x1="987.9" y1="3.8" x2="0.0" y2="185.9"/><line x1="955.1" y1="0.4" x2="0.0" y2="170.0"/><line x1="931.9" y1="0.0" x2="0.0" y2="162.4"/><line x1="906.4" y1="0.0" x2="0.0" y2="155.2"/><line x1="880.9" y1="0.0" x2="0.0" y2="148.2"/><line x1="830.0" y1="0.0" x2="0.0" y2="134.9"/><line x1="804.5" y1="0.0" x2="0.0" y2="128.5"/><line x1="779.0" y1="0.0" x2="0.0" y2="122.4"/><line x1="753.5" y1="0.0" x2="0.0" y2="116.5"/><line x1="702.6" y1="0.0" x2="0.0" y2="105.2"/><line x1="677.1" y1="0.0" x2="-0.0" y2="99.9"/><line x1="651.6" y1="0.0" x2="0.0" y2="94.7"/><line x1="626.1" y1="0.0" x2="0.0" y2="89.6"/><line x1="575.2" y1="0.0" x2="0.0" y2="79.9"/><line x1="549.7" y1="0.0" x2="0.0" y2="75.3"/><line x1="524.3" y1="0.0" x2="0.0" y2="70.8"/><line x1="498.8" y1="0.0" x2="0.0" y2="66.4"/><line x1="447.9" y1="0.0" x2="0.0" y2="58.0"/><line x1="422.4" y1="0.0" x2="0.0" y2="54.0"/><line x1="396.9" y1="-0.0" x2="0.0" y2="50.1"/><line x1="371.5" y1="0.0" x2="0.0" y2="46.3"/><line x1="320.6" y1="0.0" x2="0.0" y2="38.9"/><line x1="295.1" y1="0.0" x2="0.0" y2="35.4"/><line x1="269.7" y1="0.0" x2="0.0" y2="31.9"/><line x1="244.2" y1="0.0" x2="0.0" y2="28.6"/><line x1="193.3" y1="0.0" x2="0.0" y2="22.1"/><line x1="167.9" y1="0.0" x2="0.0" y2="18.9"/><line x1="142.4" y1="0.0" x2="0.0" y2="15.9"/><line x1="117.0" y1="0.0" x2="0.0" y2="12.9"/><line x1="66.1" y1="0.0" x2="0.0" y2="7.1"/><line x1="40.7" y1="0.0" x2="0.0" y2="4.3"/><line x1="15.2" y1="0.0" x2="0.0" y2="1.6"/></g><g stroke="#7a7f87" stroke-width="1" fill="none"><line x1="951.2" y1="0.0" x2="1853.0" y2="93.0"/><line x1="787.1" y1="0.0" x2="1853.0" y2="118.1"/><line x1="623.0" y1="-0.0" x2="1853.0" y2="147.3"/><line x1="459.0" y1="0.0" x2="1853.0" y2="181.6"/><line x1="295.1" y1="0.0" x2="1853.0" y2="222.5"/><line x1="131.2" y1="0.0" x2="1853.0" y2="272.0"/><line x1="0.0" y1="5.8" x2="1853.0" y2="333.3"/><line x1="0.0" y1="39.4" x2="1853.0" y2="411.2"/><line x1="0.0" y1="83.5" x2="1853.0" y2="513.3"/><line x1="0.0" y1="143.9" x2="1853.0" y2="653.1"/><line x1="0.0" y1="231.6" x2="1728.0" y2="814.0"/><line x1="0.0" y1="370.7" x2="1017.6" y2="814.0"/><line x1="0.0" y1="624.6" x2="307.5" y2="814.0"/><line x1="1853.0" y1="336.1" x2="1456.7" y2="814.0"/><line x1="1853.0" y1="111.6" x2="903.4" y2="814.0"/><line x1="1726.3" y1="79.9" x2="350.2" y2="814.0"/><line x1="1465.8" y1="53.1" x2="0.0" y2="555.1"/><line x1="1351.2" y1="41.2" x2="0.0" y2="433.8"/><line x1="1245.3" y1="30.3" x2="0.0" y2="344.5"/><line x1="1147.3" y1="20.2" x2="0.0" y2="276.0"/><line x1="1056.2" y1="10.8" x2="0.0" y2="221.8"/><line x1="971.4" y1="2.1" x2="-0.0" y2="177.8"/><line x1="855.5" y1="0.0" x2="0.0" y2="141.4"/><line x1="728.0" y1="0.0" x2="0.0" y2="110.8"/><line x1="600.7" y1="0.0" x2="0.0" y2="84.7"/><line x1="473.3" y1="0.0" x2="0.0" y2="62.2"/><line x1="346.0" y1="0.0" x2="0.0" y2="42.5"/><line x1="218.8" y1="0.0" x2="0.0" y2="25.3"/><line x1="91.5" y1="0.0" x2="0.0" y2="10.0"/></g><line x1="1590.4" y1="65.9" x2="0.0" y2="729.4" stroke="#ad4949" stroke-width="1.6"/><polygon points="255.7,654.8 414.2,587.0 414.6,586.2 414.6,572.5 415.8,571.2 1044.6,313.6 1061.5,312.6 1108.3,330.1 578.3,582.0 507.5,614.3 501.2,611.1 490.2,608.8 479.2,611.1 315.4,684.6" fill="#6f7073"/><polygon points="1044.6,313.6 1061.7,312.8 1158.3,322.8 1273.3,347.8 1113.3,330.3 1108.3,330.1" fill="#5a5b5e"/><defs><linearGradient id="gEnd" x1="0" y1="0" x2="0.3" y2="1"><stop offset="0" stop-color="#a4a4a4"/><stop offset="1" stop-color="#8e8e8e"/></linearGradient><linearGradient id="gFront" x1="0" y1="0" x2="1" y2="1"><stop offset="0" stop-color="#cdcdcd"/><stop offset="1" stop-color="#c0c0c0"/></linearGradient></defs><polygon points="255.7,654.8 315.4,684.6 337.4,809.0 280.4,776.6" fill="url(#gEnd)"/><polygon points="315.4,684.6 479.2,611.1 491.8,724.5 337.4,809.0" fill="url(#gFront)"/><polygon points="479.2,611.1 490.2,608.8 501.2,611.1 507.5,614.3 520.9,739.4 510.6,729.2 501.2,722.1 491.8,724.5" fill="#b4b4b4"/><path d="M507.5,614.3 578.3,582.0 1108.3,330.1 1066.9,367.2 895.0,448.7 619.3,582.0 590.9,597.7 575.2,618.2 567.3,641.8 565.7,663.9 573.6,706.4 520.9,739.4 Z" fill="#cbcbcb"/><polygon points="1108.3,330.1 1113.3,330.3 1273.3,347.8 1266.7,373.7 1158.3,365.5 1145.0,366.5 1130.0,370.5 1116.7,374.5 1101.7,376.6 1090.0,375.5 1078.0,372.5 1066.9,367.2" fill="#c9c9c9"/><clipPath id="cpVol"><polygon points="1108.3,330.1 1175.0,336.0 1173.0,364.0 1158.3,365.5 1145.0,366.5 1130.0,370.5 1116.7,374.5 1101.7,376.6 1090.0,375.5 1078.0,372.5 1066.9,367.2"/></clipPath><polygon points="1108.3,330.1 1175.0,336.0 1173.0,364.0 1158.3,365.5 1145.0,366.5 1130.0,370.5 1116.7,374.5 1101.7,376.6 1090.0,375.5 1078.0,372.5 1066.9,367.2" fill="#b8b8b8"/><path d="M1076.0 328.0 Q1071.0 357.0 1063.0 382.0 M1078.2 328.0 Q1073.3 357.0 1065.4 382.0 M1080.5 328.0 Q1075.6 357.0 1067.9 382.0 M1082.8 328.0 Q1078.0 357.0 1070.5 382.0 M1085.3 328.0 Q1080.6 357.0 1073.2 382.0 M1087.8 328.0 Q1083.2 357.0 1076.0 382.0 M1090.4 328.0 Q1085.8 357.0 1078.9 382.0 M1093.1 328.0 Q1088.6 357.0 1081.8 382.0 M1095.9 328.0 Q1091.5 357.0 1084.9 382.0 M1098.8 328.0 Q1094.5 357.0 1088.1 382.0 M1101.8 328.0 Q1097.6 357.0 1091.4 382.0 M1104.9 328.0 Q1100.8 357.0 1094.8 382.0 M1108.1 328.0 Q1104.1 357.0 1098.3 382.0 M1111.4 328.0 Q1107.5 357.0 1102.0 382.0 M1114.9 328.0 Q1111.1 357.0 1105.8 382.0 M1118.5 328.0 Q1114.7 357.0 1109.7 382.0 M1122.1 328.0 Q1118.5 357.0 1113.7 382.0 M1126.0 328.0 Q1122.4 357.0 1117.9 382.0 M1129.9 328.0 Q1126.5 357.0 1122.3 382.0 M1134.0 328.0 Q1130.7 357.0 1126.8 382.0 M1138.2 328.0 Q1135.1 357.0 1131.4 382.0 M1142.6 328.0 Q1139.6 357.0 1136.3 382.0 M1147.1 328.0 Q1144.3 357.0 1141.2 382.0 M1151.8 328.0 Q1149.1 357.0 1146.4 382.0 M1156.7 328.0 Q1154.1 357.0 1151.7 382.0 M1161.7 328.0 Q1159.3 357.0 1157.3 382.0 M1166.9 328.0 Q1164.6 357.0 1163.0 382.0 M1172.3 328.0 Q1170.2 357.0 1168.9 382.0 M1177.8 328.0 Q1175.9 357.0 1175.0 382.0 M1063.0 365.0 Q1103.0 382.0 1180.0 363.0 M1063.0 362.6 Q1103.0 378.4 1180.0 360.2 M1063.0 360.2 Q1103.0 374.9 1180.0 357.4 M1063.0 357.9 Q1103.0 371.3 1180.0 354.6 M1063.0 355.5 Q1103.0 367.7 1180.0 351.8 M1063.0 353.1 Q1103.0 364.1 1180.0 349.1 M1063.0 350.7 Q1103.0 360.6 1180.0 346.3 M1063.0 348.3 Q1103.0 357.0 1180.0 343.5 M1063.0 346.0 Q1103.0 353.4 1180.0 340.7 M1063.0 343.6 Q1103.0 349.9 1180.0 337.9 M1063.0 341.2 Q1103.0 346.3 1180.0 335.1 M1067.0 382.0 Q1085.0 354.0 1113.0 330.0 M1074.0 382.0 Q1092.0 354.0 1119.0 330.0 M1081.0 382.0 Q1099.0 354.0 1125.0 330.0 M1088.0 382.0 Q1106.0 354.0 1131.0 330.0 M1095.0 382.0 Q1113.0 354.0 1137.0 330.0 M1102.0 382.0 Q1120.0 354.0 1143.0 330.0 M1109.0 382.0 Q1127.0 354.0 1149.0 330.0 M1116.0 382.0 Q1134.0 354.0 1155.0 330.0 M1123.0 382.0 Q1141.0 354.0 1161.0 330.0" fill="none" stroke="#000" stroke-width="0.75" clip-path="url(#cpVol)"/><polygon points="599.4,590.9 1066.9,367.2 1085.0,354.0 895.0,440.0 635.0,562.0 585.0,587.0" fill="#7d7d7d" opacity="0.55"/><polyline points="280.4,776.6 255.7,654.8 414.2,587.0 414.6,586.2 414.6,572.5 415.8,571.2 1044.6,313.6 1061.7,312.8 1158.3,322.8 1273.3,347.8 1266.7,373.7 1158.3,365.5 1145.0,366.5 1130.0,370.5 1116.7,374.5 1101.7,376.6 1090.0,375.5 1078.0,372.5 1066.9,367.2 895.0,448.7 619.3,582.0 590.9,597.7 575.2,618.2 567.3,641.8 565.7,663.9 573.6,706.4 520.9,739.4" fill="none" stroke="#000" stroke-linejoin="round" stroke-linecap="round" stroke-width="2.2"/><polyline points="280.4,776.6 337.4,809.0 491.8,724.5" fill="none" stroke="#000" stroke-linejoin="round" stroke-linecap="round" stroke-width="2.2"/><polyline points="491.8,724.5 501.2,722.1 510.6,729.2 520.9,739.4" fill="none" stroke="#000" stroke-linejoin="round" stroke-linecap="round" stroke-width="1.8"/><polyline points="255.7,654.8 315.4,684.6 337.4,809.0" fill="none" stroke="#000" stroke-linejoin="round" stroke-linecap="round" stroke-width="2.0"/><polyline points="315.4,684.6 479.2,611.1 490.2,608.8 501.2,611.1 507.5,614.3 578.3,582.0 1108.3,330.1 1273.3,347.8" fill="none" stroke="#000" stroke-linejoin="round" stroke-linecap="round" stroke-width="2.0"/><polyline points="479.2,611.1 491.8,724.5" fill="none" stroke="#000" stroke-linejoin="round" stroke-linecap="round" stroke-width="2.0"/><polyline points="507.5,614.3 520.9,739.4" fill="none" stroke="#000" stroke-linejoin="round" stroke-linecap="round" stroke-width="2.0"/><polyline points="1044.6,313.6 1108.3,330.1" fill="none" stroke="#000" stroke-linejoin="round" stroke-linecap="round" stroke-width="1.6"/><path d="M415.2 572.6 Q431.0 577.5 425.0 582.5 Q421.0 585.0 415.2 586.8 Z" fill="#bdbcba" stroke="#000" stroke-width="1.8" stroke-linejoin="round"/><line x1="415.8" y1="580.8" x2="422.0" y2="583.6" stroke="#000" stroke-width="0.9"/><polyline points="286.9,669.0 1072.8,324.2" fill="none" stroke="#000" stroke-width="1.0"/><polyline points="276.7,666.3 300.2,787.0" fill="none" stroke="#000" stroke-width="1.0"/><polyline points="318.0,693.7 478.7,621.0" fill="none" stroke="#000" stroke-width="1.0"/><polyline points="401.0,648.0 415.0,766.0" fill="none" stroke="#000" stroke-width="1.0"/><polyline points="489.4,610.3 501.2,722.1" fill="none" stroke="#000" stroke-width="0.9"/><polyline points="498.8,611.1 510.6,729.2" fill="none" stroke="#000" stroke-width="1.8"/><path d="M479.5 620.3 Q493.0 613.0 507.0 621.6" fill="none" stroke="#000" stroke-width="0.9"/><polyline points="1061.7,312.8 1113.3,330.3" fill="none" stroke="#000" stroke-width="2.6"/><polyline points="1123.0,331.3 1121.0,369.0" fill="none" stroke="#000" stroke-width="0.8"/><polyline points="1136.0,332.7 1134.0,369.0" fill="none" stroke="#000" stroke-width="0.8"/><polyline points="1148.0,334.0 1146.0,369.0" fill="none" stroke="#000" stroke-width="0.8"/><polyline points="1161.0,335.4 1159.0,365.4" fill="none" stroke="#000" stroke-width="0.8"/><polyline points="1174.0,336.8 1172.0,366.4" fill="none" stroke="#000" stroke-width="1.3"/><polyline points="1188.0,338.4 1186.0,367.5" fill="none" stroke="#000" stroke-width="1.3"/><polyline points="1201.0,339.8 1199.0,368.5" fill="none" stroke="#000" stroke-width="1.3"/><polyline points="1214.0,341.2 1212.0,369.5" fill="none" stroke="#000" stroke-width="1.3"/><polyline points="1226.0,342.5 1224.0,370.5" fill="none" stroke="#000" stroke-width="1.3"/><polyline points="1237.0,343.7 1235.0,371.3" fill="none" stroke="#000" stroke-width="1.3"/><polyline points="1248.0,344.9 1246.0,372.2" fill="none" stroke="#000" stroke-width="1.3"/><polyline points="1260.0,346.2 1258.0,373.1" fill="none" stroke="#000" stroke-width="1.3"/><polyline points="1264.0,346.7 1262.0,373.4" fill="none" stroke="#000" stroke-width="1.3"/><polyline points="583.6,584.2 856.0,455.5 1098.0,339.4" fill="none" stroke="#000" stroke-width="0.8"/><polyline points="587.8,586.0 866.4,453.7 1089.7,346.8" fill="none" stroke="#000" stroke-width="0.8"/><polyline points="591.0,587.3 874.2,452.3 1083.5,352.4" fill="none" stroke="#000" stroke-width="0.8"/><polyline points="593.5,588.4 880.4,451.2 1078.5,356.8" fill="none" stroke="#000" stroke-width="0.8"/><polyline points="595.6,589.3 885.6,450.3 1074.4,360.5" fill="none" stroke="#000" stroke-width="0.8"/><polyline points="597.3,590.0 889.8,449.6 1071.0,363.5" fill="none" stroke="#000" stroke-width="0.8"/><polyline points="635.0,555.1 627.0,575.1" fill="none" stroke="#000" stroke-width="0.8"/><polyline points="670.0,538.5 662.0,558.5" fill="none" stroke="#000" stroke-width="0.8"/><polyline points="705.0,521.9 697.0,541.9" fill="none" stroke="#000" stroke-width="0.8"/><polyline points="735.0,507.6 727.0,527.6" fill="none" stroke="#000" stroke-width="0.8"/><polyline points="765.0,493.4 757.0,513.4" fill="none" stroke="#000" stroke-width="0.8"/><polyline points="813.0,470.6 805.0,490.6" fill="none" stroke="#000" stroke-width="0.8"/><polyline points="935.0,412.7 927.0,428.7" fill="none" stroke="#000" stroke-width="0.8"/><polyline points="1035.0,365.3 1027.0,381.3" fill="none" stroke="#000" stroke-width="0.8"/><clipPath id="cpFil"><polygon points="507.5,614.3 578.3,582.0 635.0,568.0 619.3,582.0 590.9,597.7 575.2,618.2 567.3,641.8 565.7,663.9 573.6,706.4 520.9,739.4"/></clipPath><path d="M519.0 739.0 C525.0 682.0 540.0 632.0 606.0 582.0 M526.7 734.3 C530.4 679.4 544.4 629.4 608.4 581.4 M534.4 729.6 C535.9 676.9 548.9 626.9 610.9 580.9 M542.1 724.9 C541.3 674.3 553.3 624.3 613.3 580.3 M549.9 720.1 C546.7 671.7 557.7 621.7 615.7 579.7 M557.6 715.4 C552.1 669.1 562.1 619.1 618.1 579.1 M565.3 710.7 C557.6 666.6 566.6 616.6 620.6 578.6 M573.0 706.0 C563.0 664.0 571.0 614.0 623.0 578.0 M509.9 626.0 Q543.7 639.0 569.0 645.0 M515.4 665.4 Q543.7 662.3 567.0 658.0 M517.0 690.6 Q543.7 682.7 567.0 677.0 M518.5 712.6 Q543.7 704.8 572.0 696.9 M539.0 601.0 Q551.0 618.0 568.0 642.0" fill="none" stroke="#000" stroke-width="0.9" clip-path="url(#cpFil)"/><path d="M507.5,614.3 578.3,582.0 635.0,568.0 619.3,582.0 590.9,597.7 575.2,618.2 567.3,641.8 565.7,663.9 573.6,706.4 520.9,739.4 Z" fill="url(#gFilShade)" opacity="0.35" clip-path="url(#cpFil)"/><defs><linearGradient id="gFilShade" x1="0" y1="0" x2="1" y2="0"><stop offset="0" stop-color="#fff" stop-opacity="0"/><stop offset="0.7" stop-color="#fff" stop-opacity="0"/><stop offset="1" stop-color="#555"/></linearGradient></defs><g stroke="#5a5a5a" stroke-width="1.1" fill="none"><line x1="36.0" y1="778.0" x2="36.0" y2="750.0"/><line x1="36.0" y1="778.0" x2="54.0" y2="769.5"/><line x1="36.0" y1="778.0" x2="12.0" y2="771.4"/></g><text x="38.6" y="750.8" font-family="Liberation Sans" font-size="13.5" fill="#555">z</text><text x="56.8" y="770.2" font-family="Liberation Sans" font-size="13.5" fill="#555">x</text><text x="15.2" y="770.3" font-family="Liberation Sans" font-size="13.5" fill="#555">y</text></svg>
<svg class="r" style="left:65px;top:158px;" width="92" height="18" viewBox="0 0 92 18"><path d="M0 0 H91 V15 L88 18 H0 Z" fill="#809ee9"/><line x1="80.5" y1="2" x2="80.5" y2="17" stroke="#222"/><path d="M82 7 H89 L85.5 11 Z" fill="#222"/></svg>
<span class="t" style="left:72.50px;top:160.54px;font-size:12px;line-height:12px;font-weight:700;color:#1a1a2a;letter-spacing:-0.243px;">Perspective</span>
<div class="r" style="left:64px;top:972px;width:1855px;height:1px;background:#c7cfe2;"></div>
<svg class="r" style="left:63px;top:972px;" width="77" height="22" viewBox="0 0 77 22"><path d="M1.5 0 V13 L8 20.5 H72 Q74.5 20.5 74.5 18 V0" fill="#ebecf0" stroke="#c7cfe2"/></svg>
<span class="t" style="left:74.50px;top:977.64px;font-size:12px;line-height:12px;color:#1e1e1e;letter-spacing:-0.245px;">Perspective</span>
<span class="t" style="left:148.30px;top:977.64px;font-size:12px;line-height:12px;color:#1e1e1e;letter-spacing:0.051px;">Top</span>
<span class="t" style="left:183.50px;top:977.64px;font-size:12px;line-height:12px;color:#1e1e1e;letter-spacing:-0.101px;">Front</span>
<span class="t" style="left:226.60px;top:977.64px;font-size:12px;line-height:12px;color:#1e1e1e;letter-spacing:0.072px;">Left</span>
<svg class="r" style="left:260px;top:978px;" width="11" height="11" viewBox="0 0 11 11"><path d="M4 0.5 H6.5 V4 H10 V6.5 H6.5 V10 H4 V6.5 H0.5 V4 H4 Z" fill="none" stroke="#888"/></svg>
<div class="r" style="left:3px;top:997px;width:1px;height:23px;background:#c7cfe2;"></div>
<div class="r" style="left:5px;top:997px;width:1px;height:23px;background:#c7cfe2;"></div>
<svg class="r" style="left:9px;top:1003px;" width="14" height="14" viewBox="0 0 14 14"><rect x="0.5" y="0.5" width="12" height="12" fill="#fff" stroke="#333" stroke-width="1"/><path d="M2.5 6.8 L5.2 9.6 L10.5 3" fill="none" stroke="#222" stroke-width="1.1"/></svg>
<span class="t" style="left:25.40px;top:1003.84px;font-size:12px;line-height:12px;color:#1e1e1e;letter-spacing:-0.817px;">End</span>
<svg class="r" style="left:52px;top:1003px;" width="14" height="14" viewBox="0 0 14 14"><rect x="0.5" y="0.5" width="12" height="12" fill="#fff" stroke="#333" stroke-width="1"/><path d="M2.5 6.8 L5.2 9.6 L10.5 3" fill="none" stroke="#222" stroke-width="1.1"/></svg>
<span class="t" style="left:68.40px;top:1003.84px;font-size:12px;line-height:12px;color:#1e1e1e;letter-spacing:-0.402px;">Near</span>
<svg class="r" style="left:100px;top:1003px;" width="14" height="14" viewBox="0 0 14 14"><rect x="0.5" y="0.5" width="12" height="12" fill="#fff" stroke="#333" stroke-width="1"/><path d="M2.5 6.8 L5.2 9.6 L10.5 3" fill="none" stroke="#222" stroke-width="1.1"/></svg>
<span class="t" style="left:116.40px;top:1003.84px;font-size:12px;line-height:12px;color:#1e1e1e;letter-spacing:-0.050px;">Point</span>
<svg class="r" style="left:151px;top:1003px;" width="14" height="14" viewBox="0 0 14 14"><rect x="0.5" y="0.5" width="12" height="12" fill="#fff" stroke="#333" stroke-width="1"/><path d="M2.5 6.8 L5.2 9.6 L10.5 3" fill="none" stroke="#222" stroke-width="1.1"/></svg>
<span class="t" style="left:167.20px;top:1003.84px;font-size:12px;line-height:12px;color:#1e1e1e;letter-spacing:0.255px;">Mid</span>
<svg class="r" style="left:195px;top:1003px;" width="14" height="14" viewBox="0 0 14 14"><rect x="0.5" y="0.5" width="12" height="12" fill="#fff" stroke="#333" stroke-width="1"/><path d="M2.5 6.8 L5.2 9.6 L10.5 3" fill="none" stroke="#222" stroke-width="1.1"/></svg>
<span class="t" style="left:211.40px;top:1003.84px;font-size:12px;line-height:12px;color:#1e1e1e;letter-spacing:-0.737px;">Cen</span>
<svg class="r" style="left:239px;top:1003px;" width="14" height="14" viewBox="0 0 14 14"><rect x="0.5" y="0.5" width="12" height="12" fill="#fff" stroke="#333" stroke-width="1"/></svg>
<span class="t" style="left:255.60px;top:1003.84px;font-size:12px;line-height:12px;color:#1e1e1e;letter-spacing:-0.147px;">Int</span>
<svg class="r" style="left:276px;top:1003px;" width="14" height="14" viewBox="0 0 14 14"><rect x="0.5" y="0.5" width="12" height="12" fill="#fff" stroke="#333" stroke-width="1"/></svg>
<span class="t" style="left:292.20px;top:1003.84px;font-size:12px;line-height:12px;color:#1e1e1e;letter-spacing:-0.537px;">Perp</span>
<svg class="r" style="left:323px;top:1003px;" width="14" height="14" viewBox="0 0 14 14"><rect x="0.5" y="0.5" width="12" height="12" fill="#fff" stroke="#333" stroke-width="1"/></svg>
<span class="t" style="left:339.20px;top:1003.84px;font-size:12px;line-height:12px;color:#1e1e1e;letter-spacing:-0.749px;">Tan</span>
<svg class="r" style="left:365px;top:1003px;" width="14" height="14" viewBox="0 0 14 14"><rect x="0.5" y="0.5" width="12" height="12" fill="#fff" stroke="#333" stroke-width="1"/></svg>
<span class="t" style="left:381.20px;top:1003.84px;font-size:12px;line-height:12px;color:#1e1e1e;letter-spacing:-0.213px;">Quad</span>
<svg class="r" style="left:417px;top:1003px;" width="14" height="14" viewBox="0 0 14 14"><rect x="0.5" y="0.5" width="12" height="12" fill="#fff" stroke="#333" stroke-width="1"/></svg>
<span class="t" style="left:433.00px;top:1003.84px;font-size:12px;line-height:12px;color:#1e1e1e;letter-spacing:0.079px;">Knot</span>
<svg class="r" style="left:465px;top:1003px;" width="14" height="14" viewBox="0 0 14 14"><rect x="0.5" y="0.5" width="12" height="12" fill="#fff" stroke="#333" stroke-width="1"/><path d="M2.5 6.8 L5.2 9.6 L10.5 3" fill="none" stroke="#222" stroke-width="1.1"/></svg>
<span class="t" style="left:481.30px;top:1003.84px;font-size:12px;line-height:12px;color:#1e1e1e;letter-spacing:-0.520px;">Vertex</span>
<svg class="r" style="left:522px;top:1004px;" width="12" height="12" viewBox="0 0 12 12"><rect x="0.5" y="0.5" width="10" height="10" fill="#e3e3e3" stroke="#cbcbcb"/></svg>
<span class="t" style="left:537.20px;top:1003.84px;font-size:12px;line-height:12px;color:#333;letter-spacing:-0.107px;">Project</span>
<svg class="r" style="left:590px;top:1004px;" width="12" height="12" viewBox="0 0 12 12"><rect x="0.5" y="0.5" width="10" height="10" fill="#e3e3e3" stroke="#cbcbcb"/></svg>
<span class="t" style="left:605.00px;top:1003.84px;font-size:12px;line-height:12px;color:#333;letter-spacing:-0.288px;">Disable</span>
<div class="r" style="left:0px;top:1020px;width:1920px;height:1px;background:#c7cfe2;"></div>
<div class="r" style="left:49px;top:1021px;width:1px;height:19px;background:#c7cfe2;"></div>
<div class="r" style="left:137px;top:1021px;width:1px;height:19px;background:#c7cfe2;"></div>
<div class="r" style="left:225px;top:1021px;width:1px;height:19px;background:#c7cfe2;"></div>
<div class="r" style="left:313px;top:1021px;width:1px;height:19px;background:#c7cfe2;"></div>
<div class="r" style="left:401px;top:1021px;width:1px;height:19px;background:#c7cfe2;"></div>
<div class="r" style="left:569px;top:1021px;width:1px;height:19px;background:#c7cfe2;"></div>
<div class="r" style="left:634px;top:1021px;width:1px;height:19px;background:#c7cfe2;"></div>
<div class="r" style="left:679px;top:1021px;width:1px;height:19px;background:#c7cfe2;"></div>
<div class="r" style="left:726px;top:1021px;width:1px;height:19px;background:#c7cfe2;"></div>
<div class="r" style="left:774px;top:1021px;width:1px;height:19px;background:#c7cfe2;"></div>
<div class="r" style="left:847px;top:1021px;width:1px;height:19px;background:#c7cfe2;"></div>
<div class="r" style="left:906px;top:1021px;width:1px;height:19px;background:#c7cfe2;"></div>
<div class="r" style="left:998px;top:1021px;width:1px;height:19px;background:#c7cfe2;"></div>
<div class="r" style="left:1038px;top:1021px;width:1px;height:19px;background:#c7cfe2;"></div>
<div class="r" style="left:1912px;top:1021px;width:1px;height:19px;background:#c7cfe2;"></div>
<div class="r" style="left:727px;top:1021px;width:47px;height:19px;background:#d9e0f0;"></div>
<div class="r" style="left:775px;top:1021px;width:72px;height:19px;background:#d9e0f0;"></div>
<div class="r" style="left:848px;top:1021px;width:58px;height:19px;background:#d9e0f0;"></div>
<span class="t" style="left:6.00px;top:1024.84px;font-size:12px;line-height:12px;color:#1e1e1e;letter-spacing:-0.393px;">CPlane</span>
<span class="t" style="left:72.00px;top:1024.84px;font-size:12px;line-height:12px;color:#1e1e1e;letter-spacing:-0.379px;">x 20.425</span>
<span class="t" style="left:161.00px;top:1024.84px;font-size:12px;line-height:12px;color:#1e1e1e;letter-spacing:-0.294px;">y -4.282</span>
<span class="t" style="left:252.00px;top:1024.84px;font-size:12px;line-height:12px;color:#1e1e1e;letter-spacing:-0.623px;">z 0.000</span>
<span class="t" style="left:341.00px;top:1024.84px;font-size:12px;line-height:12px;color:#1e1e1e;letter-spacing:-0.226px;">Inches</span>
<div class="r" style="left:405px;top:1024px;width:14px;height:14px;background:#000;"></div>
<span class="t" style="left:421.00px;top:1024.84px;font-size:12px;line-height:12px;color:#1e1e1e;letter-spacing:-0.085px;">Neck</span>
<span class="t" style="left:577.00px;top:1024.84px;font-size:12px;line-height:12px;color:#1e1e1e;letter-spacing:-0.447px;">Grid Snap</span>
<span class="t" style="left:642.00px;top:1024.84px;font-size:12px;line-height:12px;color:#1e1e1e;letter-spacing:-0.002px;">Ortho</span>
<span class="t" style="left:687.00px;top:1024.84px;font-size:12px;line-height:12px;color:#1e1e1e;letter-spacing:-0.281px;">Planar</span>
<span class="t" style="left:734.00px;top:1024.84px;font-size:12px;line-height:12px;font-weight:700;color:#1e1e1e;letter-spacing:-0.668px;">Osnap</span>
<span class="t" style="left:779.00px;top:1024.84px;font-size:12px;line-height:12px;font-weight:700;color:#1e1e1e;letter-spacing:-0.137px;">SmartTrack</span>
<span class="t" style="left:854.00px;top:1024.84px;font-size:12px;line-height:12px;font-weight:700;color:#1e1e1e;letter-spacing:-0.286px;">Gumball</span>
<span class="t" style="left:914.00px;top:1024.84px;font-size:12px;line-height:12px;color:#1e1e1e;letter-spacing:-0.096px;">Record History</span>
<span class="t" style="left:1006.00px;top:1024.84px;font-size:12px;line-height:12px;color:#1e1e1e;letter-spacing:-0.111px;">Filter</span>
<span class="t" style="left:1040.00px;top:1024.84px;font-size:12px;line-height:12px;color:#1e1e1e;letter-spacing:-0.117px;">Minutes from last save: 35</span>
<div class="r" style="left:0px;top:1040px;width:1920px;height:40px;background:linear-gradient(90deg,#223840 0%,#22363f 30%,#20323f 55%,#1e2d43 75%,#1b2846 100%);"></div>
<div class="r" style="left:295px;top:1040px;width:48px;height:40px;background:#4a5960;"></div>
<div class="r" style="left:103px;top:1078px;width:40px;height:2px;background:#76b9ed;"></div>
<div class="r" style="left:250px;top:1078px;width:40px;height:2px;background:#76b9ed;"></div>
<div class="r" style="left:295px;top:1078px;width:48px;height:2px;background:#76b9ed;"></div>
<svg class="r" style="left:0px;top:0px;pointer-events:none" width="1920" height="1080" viewBox="0 0 1920 1080"><path d="M16 1054.2 L22.8 1053.2 V1059.6 H16 Z M23.8 1053 L32.3 1051.8 V1059.6 H23.8 Z M16 1060.6 H22.8 V1067 L16 1066 Z M23.8 1060.6 H32.3 V1068.3 L23.8 1067.2 Z" fill="#fff"/><path d="M64.5 1053 H75 M64.5 1068 H75 M65 1056 H74.5 V1065 H65 Z M78 1053 V1055 M78 1057.5 V1068" fill="none" stroke="#fff" stroke-width="1.1"/><path d="M112 1052 H119 L121 1054 H133.5 V1068.5 H112 Z" fill="#f8d35a"/><rect x="112" y="1052" width="7" height="2" fill="#e3a21a"/><path d="M118 1068.5 V1063.5 Q118 1061.5 120 1061.5 H126 Q128 1061.5 128 1063.5 V1068.5 H125 V1064.5 H121 V1068.5 Z" fill="#2f8fdd"/><rect x="170" y="1052" width="13" height="17" fill="#fff"/><path d="M172 1055 H181 M172 1058 H181 M172 1061 H181 M172 1064 H181 M172 1067 H181" stroke="#2b579a" stroke-width="0.8"/><path d="M160.5 1052 L174 1049 V1071 L160.5 1068.5 Z" fill="#2b579a"/><text x="167" y="1064.5" text-anchor="middle" font-family="Liberation Sans" font-weight="700" font-size="9" fill="#fff">W</text><rect x="219" y="1052" width="13" height="17" fill="#fff"/><path d="M221 1055 H230 M221 1058 H230 M221 1061 H230 M221 1064 H230 M221 1067 H230 M225 1053 V1068" stroke="#217346" stroke-width="0.8"/><path d="M209.5 1052 L222.5 1049 V1071 L209.5 1068.5 Z" fill="#217346"/><text x="216" y="1064.5" text-anchor="middle" font-family="Liberation Sans" font-weight="700" font-size="9" fill="#fff">X</text><defs><radialGradient id="gFF" cx="0.6" cy="0.3" r="0.8"><stop offset="0" stop-color="#fff44f"/><stop offset="0.45" stop-color="#ff9a1f"/><stop offset="0.8" stop-color="#ff3750"/><stop offset="1" stop-color="#e31587"/></radialGradient></defs><circle cx="269.5" cy="1060.5" r="11" fill="url(#gFF)"/><path d="M271 1048 Q283 1054 280 1064 Q276 1050 271 1048 Z" fill="#ffbd2e"/><circle cx="269" cy="1061" r="5.5" fill="#7542e5"/><path d="M263 1058 Q266 1054 272 1056 Q266 1057 264 1061 Z" fill="#ff7139"/><g transform="translate(307,1048) scale(1.5)"><rect x="0" y="0" width="16" height="16" fill="#000"/><path d="M3.9 0.3 Q5.6 0.6 6.4 3 Q7 5 7.5 5.8 Q8.6 7.8 11.6 8.6 L15.6 9 L12.4 12.2 L9.6 15.6 L0.3 8 Q2.6 8.7 3.3 7.6 L4.4 5.6 Q3.3 4.8 3.9 0.3 Z" fill="#fff"/><path d="M3.5 8.6 L7.2 11.2 L8.2 10 L5 7.6 Z" fill="#000"/><path d="M14.6 1 L12.6 6.2" stroke="#fff" stroke-width="0.8"/><path d="M12.6 0.8 H14.8" stroke="#fff" stroke-width="0.6"/></g><path d="M1700.5 1062.5 L1706.2 1056.8 L1712 1062.5" fill="none" stroke="#fff" stroke-width="1"/><path d="M1724 1054.5 H1737.5 V1063.5 H1724 Z M1730.7 1063.5 V1066.5 M1727 1066.5 H1734.5 M1722 1054 V1067 M1721.5 1054 H1725 V1057 H1721.5" fill="none" stroke="#fff" stroke-width="1"/><path d="M1746 1056.5 H1749 L1753 1053 V1066 L1749 1062.5 H1746 Z" fill="none" stroke="#fff" stroke-width="1"/><path d="M1755 1057.5 Q1757 1059.5 1755 1061.5 M1757.5 1055.5 Q1761 1059.5 1757.5 1063.5 M1760 1053.5 Q1765 1059.5 1760 1065.5" fill="none" stroke="#fff" stroke-width="1"/><path d="M1878.5 1052 H1895.5 V1064 H1884 L1880 1067 V1064 H1878.5 Z" fill="#fff"/><path d="M1881 1055 H1893 M1881 1058 H1893 M1881 1061 H1889" stroke="#1b2846" stroke-width="1"/><circle cx="1894.8" cy="1067.5" r="8" fill="#2a2a2a" stroke="#666" stroke-width="1"/><text x="1894.8" y="1071.5" text-anchor="middle" font-family="Liberation Sans" font-weight="700" font-size="11" fill="#fff">1</text></svg>
<div class="r" style="left:1915px;top:1040px;width:1px;height:40px;background:#5a6478;"></div>
<span class="t" style="left:1772.60px;top:1053.24px;font-size:12px;line-height:12px;color:#fff;letter-spacing:-1.268px;">ENG</span>
<span class="t" style="left:1811.00px;top:1044.44px;font-size:12px;line-height:12px;color:#fff;letter-spacing:-0.582px;">10:47 PM</span>
<span class="t" style="left:1808.00px;top:1062.44px;font-size:12px;line-height:12px;color:#fff;letter-spacing:-0.294px;">19-Mar-21</span>
</body></html>
